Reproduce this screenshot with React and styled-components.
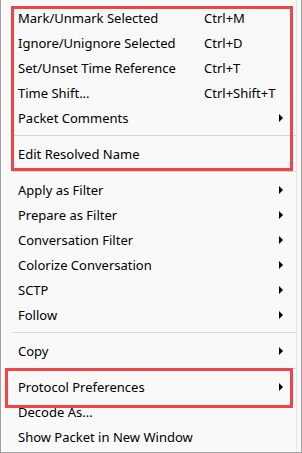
import React from 'react'
import styled, { createGlobalStyle } from 'styled-components'

const GlobalStyle = createGlobalStyle`
  html, body {
    margin: 0;
    padding: 0;
    background: #f9f9f9;
  }
`

const Menu = styled.div`
  position: relative;
  box-sizing: border-box;
  width: 302px;
  height: 453px;
  padding: 5px 5px 3px 1px;
  background: #f9f9f9;
  border-left: 1px solid #a0a0a0;
  border-right: 1px solid #a0a0a0;
  border-bottom: 1px solid #a0a0a0;
  font-family: "Noto Sans", "Open Sans", sans-serif;
  font-size: 13px;
  color: #000;
  display: flex;
  flex-direction: column;
`

const Inner = styled.div`
  position: absolute;
  top: 0;
  bottom: 0;
  right: 4px;
  width: 1px;
  background: #e6e6e6;
`

const Row = styled.div`
  display: grid;
  grid-template-columns: 186px 1fr 17px;
  align-items: center;
  height: 25px;
  padding-left: 16px;
  box-sizing: border-box;
  white-space: nowrap;
`

const Shortcut = styled.span`
  color: #000;
`

const Arrow = styled.span`
  justify-self: start;
  width: 0;
  height: 0;
  border-top: 4px solid transparent;
  border-bottom: 4px solid transparent;
  border-left: 4px solid #000;
`

const Separator = styled.div`
  height: 1px;
  margin: 5px 0 5px 11px;
  background: #d7d7d7;
`

const Highlight = styled.div`
  position: absolute;
  left: ${p => p.$left}px;
  top: ${p => p.$top}px;
  width: ${p => p.$width}px;
  height: ${p => p.$height}px;
  box-sizing: border-box;
  border: 3px solid #f0444a;
  pointer-events: none;
`

function Item({ label, shortcut, sub }) {
  return (
    <Row>
      <span>{label}</span>
      <Shortcut>{shortcut}</Shortcut>
      {sub ? <Arrow /> : <span />}
    </Row>
  )
}

export default function App() {
  return (
    <>
      <GlobalStyle />
      <Menu>
        <Inner />
        <Item label="Mark/Unmark Selected" shortcut="Ctrl+M" />
        <Item label="Ignore/Unignore Selected" shortcut="Ctrl+D" />
        <Item label="Set/Unset Time Reference" shortcut="Ctrl+T" />
        <Item label="Time Shift..." shortcut="Ctrl+Shift+T" />
        <Item label="Packet Comments" sub />
        <Separator />
        <Item label="Edit Resolved Name" />
        <Separator />
        <Item label="Apply as Filter" sub />
        <Item label="Prepare as Filter" sub />
        <Item label="Conversation Filter" sub />
        <Item label="Colorize Conversation" sub />
        <Item label="SCTP" sub />
        <Item label="Follow" sub />
        <Separator />
        <Item label="Copy" sub />
        <Separator />
        <Item label="Protocol Preferences" sub />
        <Item label="Decode As..." />
        <Item label="Show Packet in New Window" />
        <Highlight $left={10} $top={6} $width={282} $height={165} />
        <Highlight $left={4} $top={368} $width={288} $height={40} />
      </Menu>
    </>
  )
}
